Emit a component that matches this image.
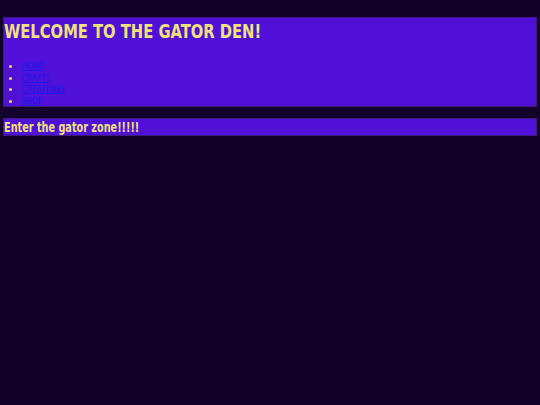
import React from 'react';

const links = ['HOME', 'CRAFTS', 'CREATIONS', 'SHOP'];

export default function App() {
  return (
    <div className="min-h-[405px] w-full bg-[#13002b] px-[3px] pt-[17px]" style={{ fontFamily: '"DejaVu Sans Condensed", "DejaVu Sans", sans-serif' }}>
      {/* Header */}
      <div className="h-[90px] border border-[#3a1a7a] bg-[#5010d8]">
        <h1 className="origin-left scale-x-[0.82] whitespace-nowrap pt-[1px] text-[20px] leading-[24px] font-bold text-[#f2e27a]">WELCOME TO THE GATOR DEN!</h1>
        <ul className="mt-[18px] list-disc pl-[17px] text-[8.5px] leading-[11.5px] marker:text-[#f2e27a]">
          {links.map(l => (
            <li key={l}>
              <a href="#" className="text-[#1a1aee] underline">{l}</a>
            </li>
          ))}
        </ul>
      </div>

      {/* Banner */}
      <div className="mt-[11px] h-[18px] border border-[#3a1a7a] bg-[#5010d8]">
        <h2 className="origin-left scale-x-[0.77] whitespace-nowrap text-[14px] leading-[16px] font-bold text-[#f2e27a]">Enter the gator zone!!!!!</h2>
      </div>
    </div>
  );
}
